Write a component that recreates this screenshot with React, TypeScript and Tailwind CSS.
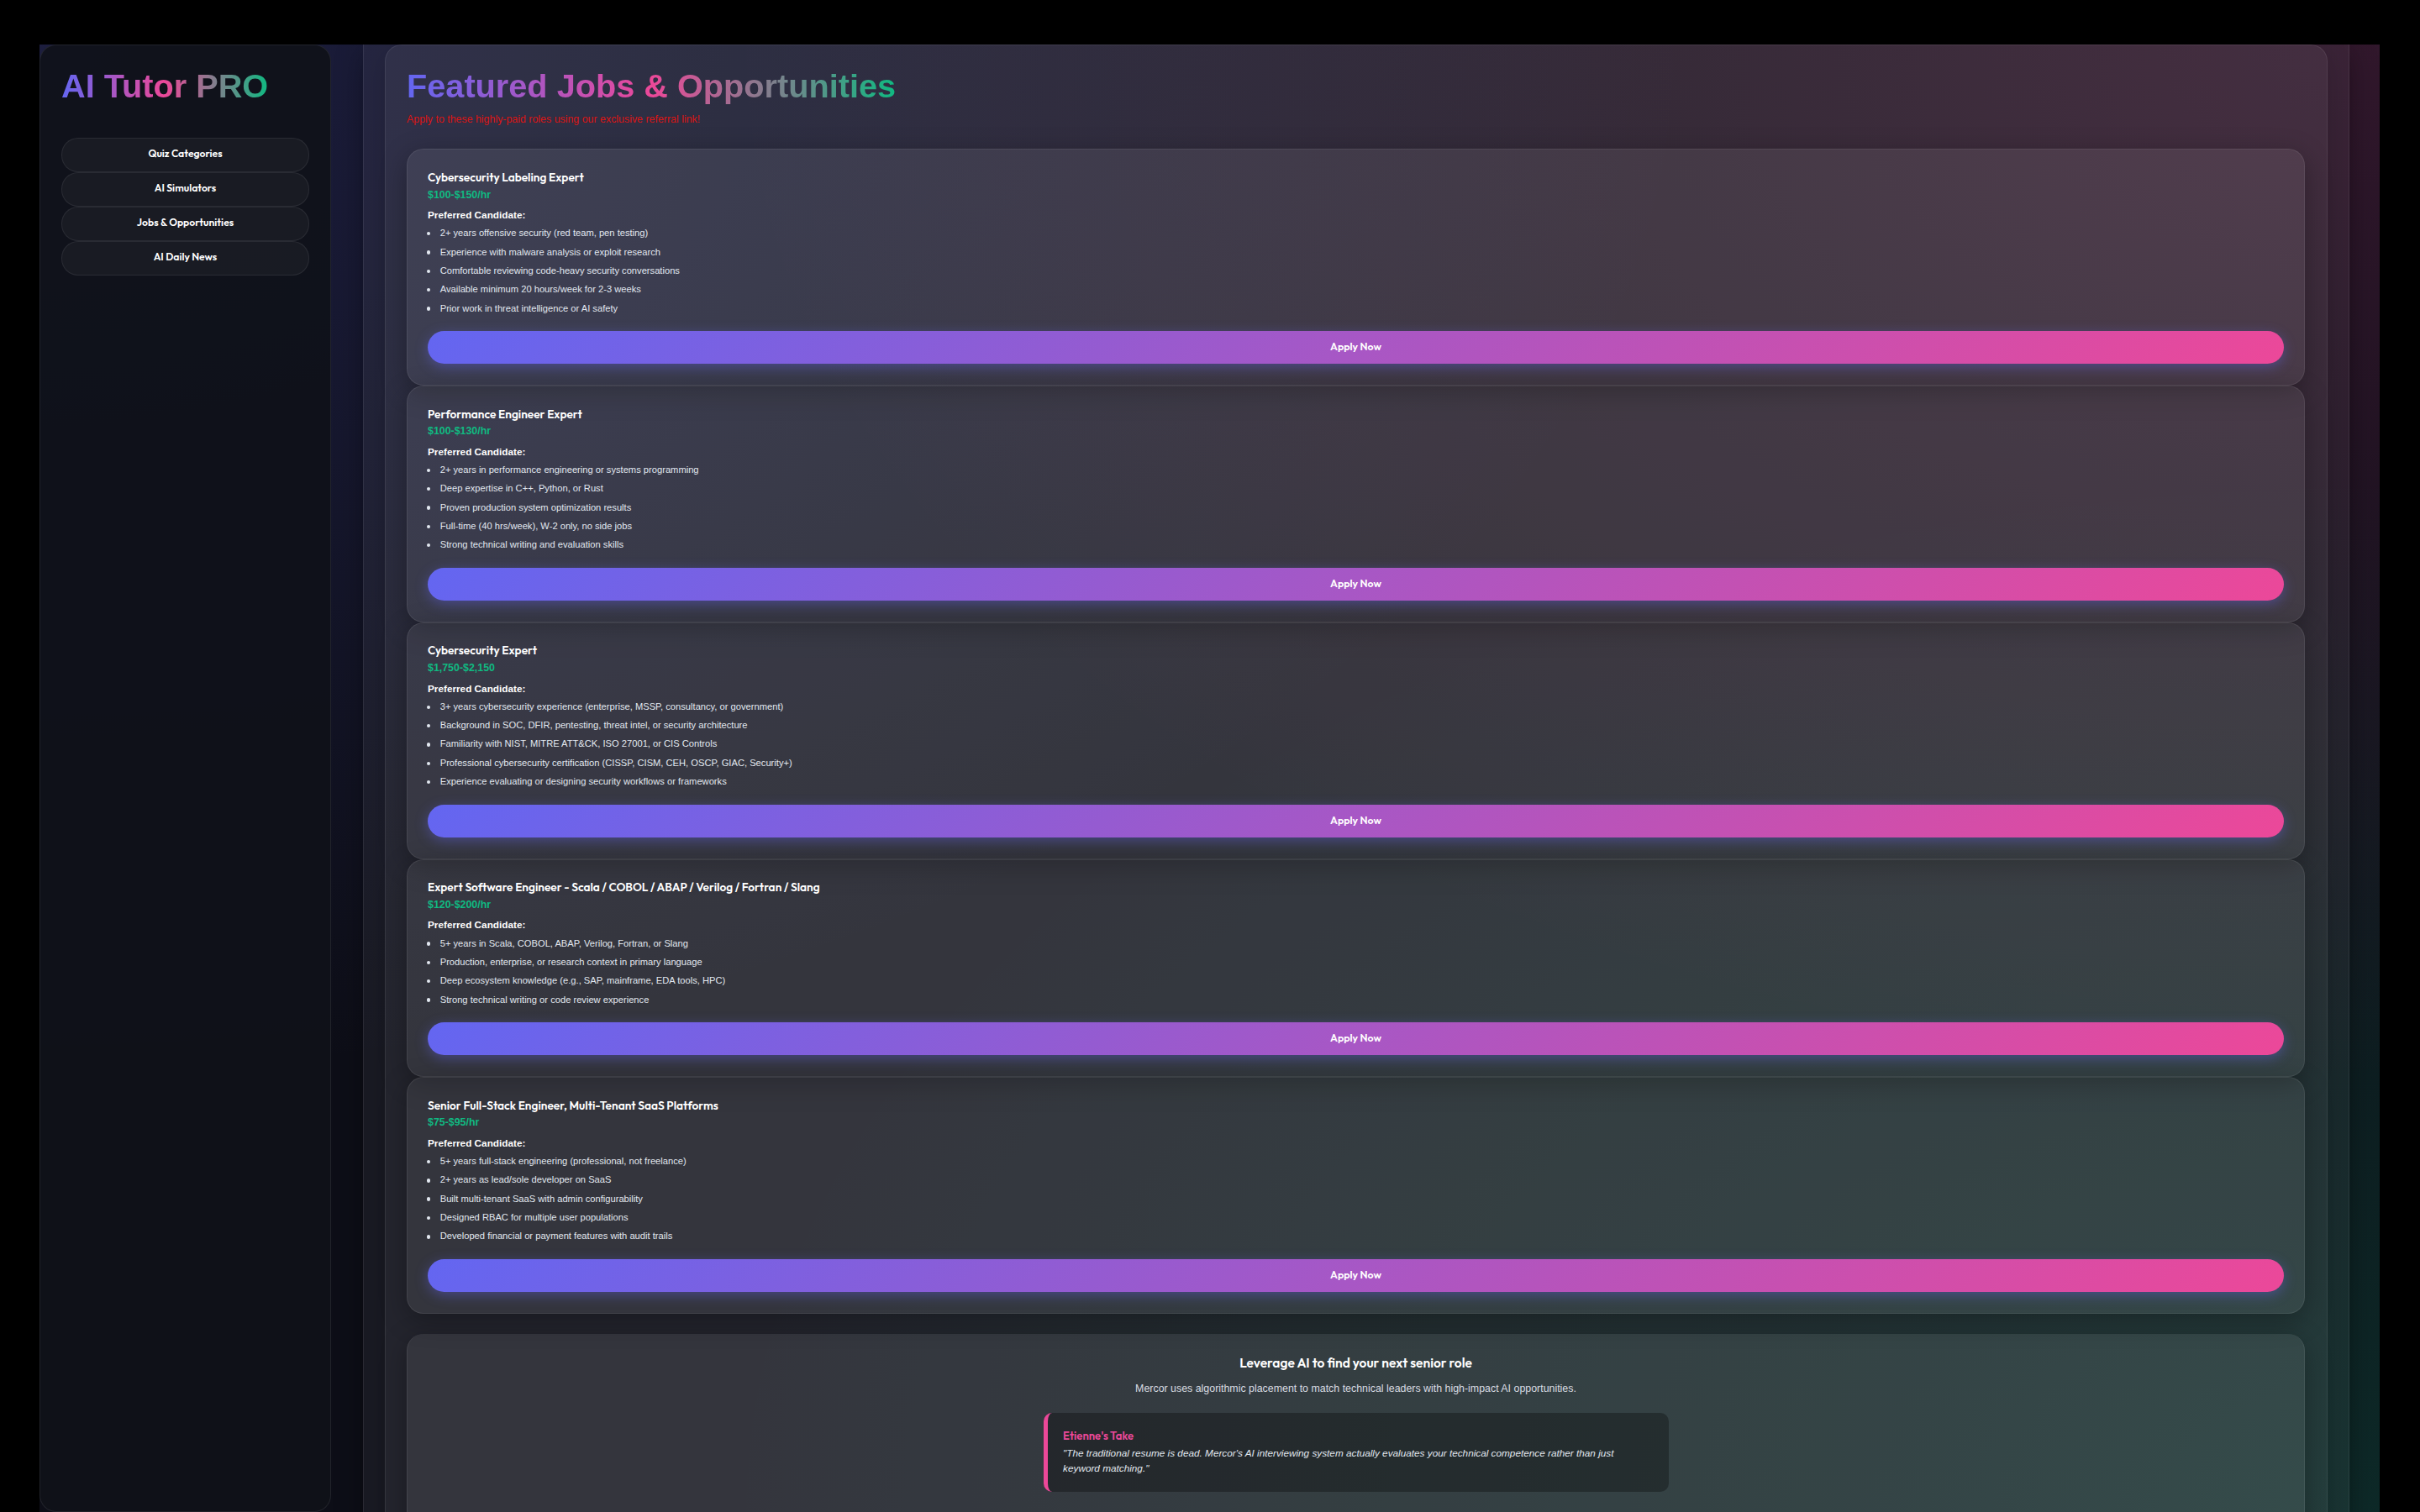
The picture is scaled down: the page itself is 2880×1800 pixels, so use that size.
interface Job {
  title: string;
  pay: string;
  requirements: string[];
}

const navItems = ["Quiz Categories", "AI Simulators", "Jobs & Opportunities", "AI Daily News"];

const jobs: Job[] = [
  {
    title: "Cybersecurity Labeling Expert",
    pay: "$100-$150/hr",
    requirements: [
      "2+ years offensive security (red team, pen testing)",
      "Experience with malware analysis or exploit research",
      "Comfortable reviewing code-heavy security conversations",
      "Available minimum 20 hours/week for 2-3 weeks",
      "Prior work in threat intelligence or AI safety",
    ],
  },
  {
    title: "Performance Engineer Expert",
    pay: "$100-$130/hr",
    requirements: [
      "2+ years in performance engineering or systems programming",
      "Deep expertise in C++, Python, or Rust",
      "Proven production system optimization results",
      "Full-time (40 hrs/week), W-2 only, no side jobs",
      "Strong technical writing and evaluation skills",
    ],
  },
  {
    title: "Cybersecurity Expert",
    pay: "$1,750-$2,150",
    requirements: [
      "3+ years cybersecurity experience (enterprise, MSSP, consultancy, or government)",
      "Background in SOC, DFIR, pentesting, threat intel, or security architecture",
      "Familiarity with NIST, MITRE ATT&CK, ISO 27001, or CIS Controls",
      "Professional cybersecurity certification (CISSP, CISM, CEH, OSCP, GIAC, Security+)",
      "Experience evaluating or designing security workflows or frameworks",
    ],
  },
  {
    title: "Expert Software Engineer - Scala / COBOL / ABAP / Verilog / Fortran / Slang",
    pay: "$120-$200/hr",
    requirements: [
      "5+ years in Scala, COBOL, ABAP, Verilog, Fortran, or Slang",
      "Production, enterprise, or research context in primary language",
      "Deep ecosystem knowledge (e.g., SAP, mainframe, EDA tools, HPC)",
      "Strong technical writing or code review experience",
    ],
  },
  {
    title: "Senior Full-Stack Engineer, Multi-Tenant SaaS Platforms",
    pay: "$75-$95/hr",
    requirements: [
      "5+ years full-stack engineering (professional, not freelance)",
      "2+ years as lead/sole developer on SaaS",
      "Built multi-tenant SaaS with admin configurability",
      "Designed RBAC for multiple user populations",
      "Developed financial or payment features with audit trails",
    ],
  },
];

const gradientText =
  "w-fit bg-[linear-gradient(to_right,#6366f1,#ec4899_50%,#10b981)] bg-clip-text text-transparent text-[39.7px] leading-[52px] font-bold whitespace-nowrap";

const displayFont = "font-['Outfit','Lato',sans-serif] font-semibold";

function Sidebar() {
  return (
    <aside className="h-[1747px] w-[347px] shrink-0 rounded-[20px] border border-white/8 bg-[#0f1119]/92 px-[25px] pt-[22px]">
      <h1 className={gradientText}>AI Tutor PRO</h1>
      <nav className="mt-[35.5px] flex flex-col">
        {navItems.map((item) => (
          <button
            key={item}
            className={`${displayFont} h-[41px] rounded-[20px] border border-white/7 bg-white/[0.04] pb-px text-[12.2px] text-white`}
          >
            {item}
          </button>
        ))}
      </nav>
    </aside>
  );
}

function JobCard({ job }: { job: Job }) {
  return (
    <article className="rounded-[20px] border border-white/8 bg-white/[0.075] px-[24px] pt-[22.6px] pb-[25px] shadow-[0_8px_32px_rgba(0,0,0,0.3)]">
      <h3 className={`${displayFont} text-[13.64px] leading-[20px] text-white`}>{job.title}</h3>
      <p className="mt-[1.8px] text-[12.4px] leading-[19.8px] font-bold text-[#10b981]">{job.pay}</p>
      <p className="mt-[3.6px] text-[11.78px] leading-[19px] font-bold text-white">Preferred Candidate:</p>
      <ul className="mt-[4.2px] text-[11.17px] leading-[17.87px] text-[#e2e8f0]">
        {job.requirements.map((text) => (
          <li key={text} className="mb-[4.47px] flex items-center">
            <span className="mr-[11.3px] -ml-px size-[4.4px] rounded-full bg-[#e2e8f0]" />
            {text}
          </li>
        ))}
      </ul>
      <button
        className={`${displayFont} mt-[17.6px] block h-[39px] w-full rounded-full bg-[linear-gradient(135deg,#6366f1,#ec4899)] text-[12.4px] text-white shadow-[0_4px_15px_rgba(99,102,241,0.4)]`}
      >
        Apply Now
      </button>
    </article>
  );
}

function ReferralPanel() {
  return (
    <section className="mt-[24.4px] h-[400px] rounded-[20px] border border-t-0 border-white/8 bg-white/[0.075] pt-[23px] text-center shadow-[0_8px_32px_rgba(0,0,0,0.3)]">
      <h2 className={`${displayFont} text-[15.5px] leading-[22px] text-white`}>
        Leverage AI to find your next senior role
      </h2>
      <p className="mt-[10.8px] text-[12.4px] leading-[19.8px] text-[#d9dce2]">
        Mercor uses algorithmic placement to match technical leaders with high-impact AI opportunities.
      </p>
      <div className="mx-auto mt-[18.6px] h-[93.6px] w-[744px] rounded-[10px] border-l-[5px] border-[#ec4899] bg-black/30 px-[18.6px] pt-[18px] text-left">
        <h4 className={`${displayFont} text-[13.1px] leading-[19px] text-[#ec4899]`}>Etienne's Take</h4>
        <p className="mt-[2px] text-[11.78px] leading-[17.6px] text-[#e2e8f0] italic">
          "The traditional resume is dead. Mercor's AI interviewing system actually evaluates your technical
          competence rather than just keyword matching."
        </p>
      </div>
    </section>
  );
}

function App() {
  return (
    <div className="h-[1800px] w-[2880px] overflow-hidden bg-black pt-[53px] pr-[48px] pl-[47px] font-['Liberation_Sans',Arial,sans-serif]">
      <div className="flex h-[1747px] overflow-hidden bg-[#0d0e17] bg-[radial-gradient(at_0%_0%,rgba(99,102,241,0.18)_0px,transparent_50%),radial-gradient(at_100%_0%,rgba(236,72,153,0.16)_0px,transparent_50%),radial-gradient(at_100%_100%,rgba(16,185,129,0.16)_0px,transparent_50%)]">
        <Sidebar />
        <div className="ml-[38px] h-[2200px] w-[2364px] border-x border-white/8 bg-white/[0.05] pr-[25.5px] pl-[24.5px] shadow-[0_8px_32px_rgba(0,0,0,0.3)]">
          <main className="h-full rounded-[20px] border border-white/8 bg-white/[0.05] px-[25.5px] pt-[22px] shadow-[0_8px_32px_rgba(0,0,0,0.15)]">
            <h2 className={gradientText}>Featured Jobs &amp; Opportunities</h2>
            <p className="mt-[4.4px] text-[12.4px] leading-[20px] text-[#dc1414]">
              Apply to these highly-paid roles using our exclusive referral link!
            </p>
            <div className="mt-[24.8px] flex flex-col">
              {jobs.map((job) => (
                <JobCard key={job.title} job={job} />
              ))}
            </div>
            <ReferralPanel />
          </main>
        </div>
      </div>
    </div>
  );
}

export default App;
